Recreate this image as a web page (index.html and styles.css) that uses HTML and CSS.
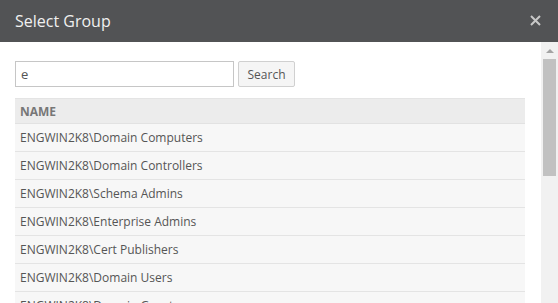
FILE: index.html
```html
<!DOCTYPE html>
<html>
<head>
<meta charset="utf-8">
<link rel="stylesheet" href="styles.css">
</head>
<body>
<div class="dialog">
  <div class="titlebar">
    <span class="title">Select Group</span>
    <span class="close">
      <svg width="11" height="11" viewBox="0 0 11 11"><path d="M1 1L10 10M10 1L1 10" stroke="#c8c8c8" stroke-width="2"/></svg>
    </span>
  </div>
  <div class="body">
    <div class="content">
      <div class="search-row">
        <input class="search-input" type="text" value="e">
        <button class="search-btn">Search</button>
      </div>
      <table class="grid">
        <thead><tr><th>NAME</th></tr></thead>
        <tbody>
          <tr><td>ENGWIN2K8\Domain Computers</td></tr>
          <tr><td>ENGWIN2K8\Domain Controllers</td></tr>
          <tr><td>ENGWIN2K8\Schema Admins</td></tr>
          <tr><td>ENGWIN2K8\Enterprise Admins</td></tr>
          <tr><td>ENGWIN2K8\Cert Publishers</td></tr>
          <tr><td>ENGWIN2K8\Domain Users</td></tr>
          <tr><td>ENGWIN2K8\Domain Guests</td></tr>
        </tbody>
      </table>
    </div>
    <div class="scrollbar">
      <div class="arrow"></div>
      <div class="thumb"></div>
    </div>
  </div>
</div>
</body>
</html>
```

FILE: styles.css
```css
html, body {
  margin: 0;
  padding: 0;
  background: #fff;
  overflow: hidden;
  font-family: "Open Sans", "Liberation Sans", sans-serif;
}
.dialog {
  width: 558px;
  height: 303px;
  display: flex;
  flex-direction: column;
  overflow: hidden;
}
.titlebar {
  height: 42px;
  flex: none;
  background: #525355;
  display: flex;
  align-items: center;
  justify-content: space-between;
  padding: 0 17px 0 15px;
  box-sizing: border-box;
}
.title {
  color: #f0f0f0;
  font-size: 16px;
  line-height: 20px;
  margin-top: -1px;
}
.close {
  display: flex;
  margin-top: -2px;
}
.body {
  flex: 1;
  display: flex;
  min-height: 0;
}
.content {
  flex: 1;
  padding: 19px 16px 0 15px;
  overflow: hidden;
}
.search-row {
  display: flex;
  gap: 4px;
  height: 26px;
}
.search-input {
  width: 219px;
  height: 26px;
  box-sizing: border-box;
  border: 1px solid #c6c6c6;
  padding: 0 5px;
  margin: 0;
  font-family: inherit;
  font-size: 13px;
  color: #555;
  outline: none;
}
.search-btn {
  width: 57px;
  height: 26px;
  box-sizing: border-box;
  border: 1px solid #d0d0d0;
  border-radius: 2px;
  background: #f5f5f5;
  color: #555;
  font-family: inherit;
  font-size: 12px;
  padding: 0;
  margin: 0;
}
.grid {
  margin-top: 11px;
  width: 510px;
  border-collapse: collapse;
}
.grid th {
  background: #ececec;
  color: #777;
  font-weight: bold;
  font-size: 12px;
  text-align: left;
  height: 25px;
  padding: 0 5px;
  border-top: 1px solid #e4e4e4;
  border-bottom: 1px solid #e2e2e2;
  box-sizing: border-box;
}
.grid td {
  background: #f7f7f7;
  color: #555;
  font-size: 12px;
  height: 28px;
  padding: 0 5px;
  border-bottom: 1px solid #e4e4e4;
  box-sizing: border-box;
}
.scrollbar {
  width: 17px;
  flex: none;
  background: #f1f1f1;
  display: flex;
  flex-direction: column;
  align-items: center;
}
.arrow {
  margin-top: 7px;
  width: 0;
  height: 0;
  border-left: 4px solid transparent;
  border-right: 4px solid transparent;
  border-bottom: 4px solid #a3a3a3;
}
.thumb {
  margin-top: 6px;
  width: 13px;
  height: 117px;
  background: #c1c1c1;
}
```
